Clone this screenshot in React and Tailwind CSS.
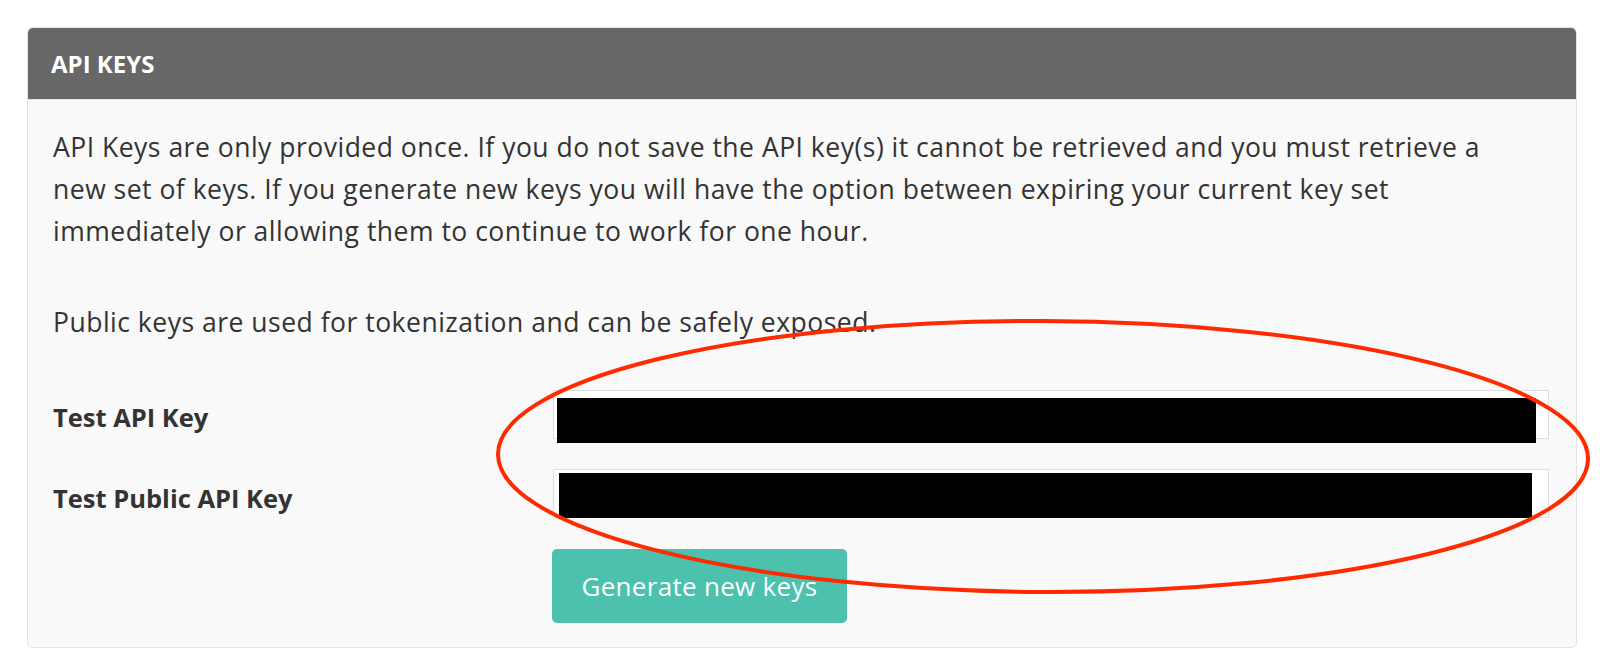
export default function App() {
  return (
    <div className="relative w-[1600px] h-[670px] bg-white overflow-hidden" style={{ fontFamily: '"Open Sans", "Noto Sans", sans-serif' }}>
      <div className="pt-[27px] pl-[27px] w-[1577px]">
        <div className="rounded-[6px] border border-[#e3e3e3] bg-[#f9f9f9] overflow-hidden">
          <div className="h-[72px] bg-[#676767] border-b border-[#e3e3e3] flex items-center px-[23px]">
            <h2 className="text-white font-bold text-[24px]">API KEYS</h2>
          </div>
          <div className="pt-[26px] pl-[25px] pr-[27px] pb-[24px] text-[#333333] text-[26.5px] leading-[42px]">
            <p className="tracking-[0.5px] whitespace-nowrap">
              API Keys are only provided once. If you do not save the API key(s) it cannot be retrieved and you must retrieve a
              <br />
              new set of keys. If you generate new keys you will have the option between expiring your current key set
              <br />
              immediately or allowing them to continue to work for one hour.
            </p>
            <p className="mt-[49px] tracking-[0.5px] whitespace-nowrap">Public keys are used for tokenization and can be safely exposed.</p>
            <div className="mt-[47px] grid grid-cols-[500px_1fr] gap-y-[30px]">
              <label className="font-bold text-[25.5px] pt-[4px] self-center">Test API Key</label>
              <div className="relative h-[49px] border border-[#dddddd] bg-white">
                <div className="absolute left-[3px] top-[7px] w-[979px] h-[45px] bg-black"></div>
              </div>
              <label className="font-bold text-[25.5px] pt-[8px] self-center">Test Public API Key</label>
              <div className="relative h-[49px] border border-[#dddddd] bg-white">
                <div className="absolute left-[5px] top-[3px] w-[973px] h-[45px] bg-black"></div>
              </div>
              <div></div>
              <div>
                <button className="w-[295px] h-[74px] rounded-[5px] bg-[#4bc1ae] text-white text-[26px] tracking-[0.3px] -ml-[1px]">Generate new keys</button>
              </div>
            </div>
          </div>
        </div>
      </div>
      <svg className="absolute left-0 top-0 pointer-events-none" width="1600" height="670" viewBox="0 0 1600 670">
        <ellipse cx="1043" cy="456.5" rx="545" ry="135.5" fill="none" stroke="#ff2a00" strokeWidth="4" transform="rotate(0.25 1043 456.5)" />
      </svg>
    </div>
  );
}
